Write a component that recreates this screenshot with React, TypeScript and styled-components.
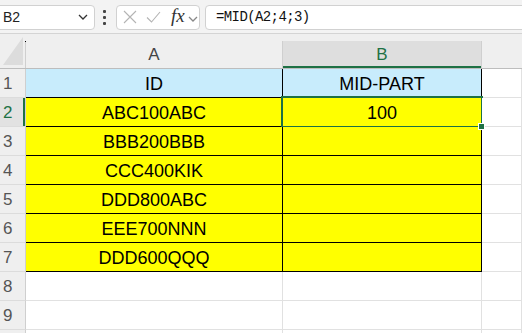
import React from 'react'
import styled, { createGlobalStyle, css } from 'styled-components';

const GlobalStyle = createGlobalStyle`
  body {
    margin: 0;
    background: #ffffff;
    font-family: "Liberation Sans", Arial, sans-serif;
    overflow: hidden;
  }
`;

const GREEN = '#1e7145';

const Window = styled.div`
  width: 522px;
  height: 333px;
  overflow: hidden;
  background: #ffffff;
`;

const Toolbar = styled.div`
  display: flex;
  align-items: center;
  height: 32px;
  padding-top: 1px;
  background: #f3f3f3;
  border-bottom: 1px solid #d4d4d4;
`;

const Box = styled.div`
  display: flex;
  align-items: center;
  height: 23px;
  background: #ffffff;
  border: 1px solid #d1d1d1;
  border-radius: 4px;
  box-sizing: content-box;
`;

const NameBox = styled(Box)`
  width: 85px;
  margin-left: -4px;
  padding: 0 6px 0 6px;
  justify-content: space-between;
  font-size: 14px;
  color: #222;
`;

const Dots = styled.div`
  display: flex;
  flex-direction: column;
  gap: 3px;
  margin: 0 10px 0 8px;
  span {
    width: 3px;
    height: 3px;
    background: #444;
    border-radius: 1px;
  }
`;

const FxBox = styled(Box)`
  width: 82px;
  padding: 0;
`;

const FormulaBox = styled(Box)`
  flex: 1;
  margin-left: 5px;
  margin-right: -6px;
  padding-left: 10px;
  font-family: "Liberation Mono", "DejaVu Sans Mono", monospace;
  font-size: 14px;
  letter-spacing: -0.6px;
  color: #111;
`;

const FxText = styled.span`
  font-family: "Liberation Serif", "DejaVu Serif", serif;
  font-style: italic;
  font-size: 19px;
  color: #333;
  margin-left: 10px;
  margin-top: -2px;
`;

const Sheet = styled.div`
  display: grid;
  grid-template-columns: 26px 257px 199px 1fr;
  grid-template-rows: 35px;
  grid-auto-rows: 29px;
  background: #ffffff;
`;

const Corner = styled.div`
  box-sizing: border-box;
  height: 35px;
  background: #efefef;
  border-bottom: 1px solid #bdbdbd;
  position: relative;
  svg { display: block; margin: 3px 0 0 3px; }
  &::after {
    content: '';
    position: absolute;
    right: 0;
    top: 7px;
    bottom: 0;
    width: 1px;
    background: #cfcfcf;
  }
  &::before {
    content: '';
    position: absolute;
    right: 0;
    top: 7px;
    width: 1px;
    height: 1px;
    background: #000;
    z-index: 1;
  }
`;

const ColHeader = styled.div`
  box-sizing: border-box;
  height: 35px;
  padding-top: 7px;
  display: flex;
  background: #efefef;
  border-bottom: 1px solid #bdbdbd;
`;

const ColLabel = styled.div<{ $active?: boolean; $last?: boolean }>`
  flex: 1;
  display: flex;
  align-items: center;
  justify-content: center;
  font-size: 17px;
  color: #444;
  border-right: ${p => (p.$last ? 'none' : '1px solid #cfcfcf')};
  ${p => p.$active && css`
    background: #dedede;
    color: ${GREEN};
    box-shadow: inset 0 -2px 0 ${GREEN};
  `}
`;

const RowHeader = styled.div<{ $active?: boolean }>`
  box-sizing: border-box;
  display: flex;
  align-items: center;
  padding: 2px 0 0 3px;
  font-size: 17px;
  color: #555;
  background: #efefef;
  border-right: 1px solid #cfcfcf;
  border-bottom: 1px solid #dcdcdc;
  ${p => p.$active && css`
    color: ${GREEN};
    background: #e2e2e2;
    box-shadow: inset -2px 0 0 ${GREEN};
  `}
`;

const Cell = styled.div<{ $fill?: string; $boxed?: boolean; $selected?: boolean }>`
  box-sizing: border-box;
  display: flex;
  align-items: center;
  justify-content: center;
  padding-top: 3px;
  font-size: 18px;
  color: #000;
  background: ${p => p.$fill || '#ffffff'};
  border-right: 1px solid ${p => (p.$boxed ? '#000' : '#e1e1e1')};
  border-bottom: 1px solid ${p => (p.$boxed ? '#000' : '#e1e1e1')};
  position: relative;
  ${p => p.$selected && css`
    &::after {
      content: '';
      position: absolute;
      left: -2px;
      top: -2px;
      right: -2px;
      bottom: -2px;
      border: 2px solid ${GREEN};
    }
    &::before {
      content: '';
      position: absolute;
      right: -4px;
      bottom: -4px;
      width: 5px;
      height: 5px;
      background: ${GREEN};
      border: 1px solid #fff;
      z-index: 2;
    }
  `}
`;

const BLUE = '#c8ecfc';
const YELLOW = '#ffff00';

const ids = ['ABC100ABC', 'BBB200BBB', 'CCC400KIK', 'DDD800ABC', 'EEE700NNN', 'DDD600QQQ'];

const Chevron = ({ color = '#333' }: { color?: string }) => (
  <svg width="10" height="6" viewBox="0 0 10 6">
    <path d="M1 1 L5 5 L9 1" fill="none" stroke={color} strokeWidth="1.3" />
  </svg>
);

const App = () => {
  const rows: { key: string; label: string; a: string; b: string; fill?: string; boxed?: boolean }[] = [
    { key: 'r1', label: '1', a: 'ID', b: 'MID-PART', fill: BLUE, boxed: true },
    ...ids.map((id, i) => ({ key: 'r' + (i + 2), label: String(i + 2), a: id, b: i === 0 ? '100' : '', fill: YELLOW, boxed: true })),
    { key: 'r8', label: '8', a: '', b: '' },
    { key: 'r9', label: '9', a: '', b: '' },
    { key: 'r10', label: '', a: '', b: '' },
  ];

  return <Window>
    <GlobalStyle/>
    <Toolbar>
      <NameBox>
        <span>B2</span>
        <Chevron/>
      </NameBox>
      <Dots><span/><span/><span/></Dots>
      <FxBox>
        <svg width="14" height="14" viewBox="0 0 14 14" style={{ marginLeft: 6 }}>
          <path d="M1 1 L13 13 M13 1 L1 13" stroke="#b4b4b4" strokeWidth="1.1" />
        </svg>
        <svg width="15" height="14" viewBox="0 0 15 14" style={{ marginLeft: 9 }}>
          <path d="M1 7.5 L5.5 12 L14 2" fill="none" stroke="#b4b4b4" strokeWidth="1.1" />
        </svg>
        <FxText>fx</FxText>
        <span style={{ marginLeft: 3 }}><Chevron color="#888"/></span>
      </FxBox>
      <FormulaBox>=MID(A2;4;3)</FormulaBox>
    </Toolbar>

    <Sheet>
      <Corner>
        <svg width="20" height="28" viewBox="0 0 20 28">
          <path d="M20 0 L20 28 L0 28 Z" fill="#dcdcdc" />
        </svg>
      </Corner>
      <ColHeader><ColLabel>A</ColLabel></ColHeader>
      <ColHeader><ColLabel $active>B</ColLabel></ColHeader>
      <ColHeader><ColLabel $last/></ColHeader>

      {rows.map(r => (
        <React.Fragment key={r.key}>
          <RowHeader $active={r.label === '2'}>{r.label}</RowHeader>
          <Cell $fill={r.fill} $boxed={r.boxed}>{r.a}</Cell>
          <Cell $fill={r.fill} $boxed={r.boxed} $selected={r.label === '2'}>{r.b}</Cell>
          <Cell/>
        </React.Fragment>
      ))}
    </Sheet>
  </Window>
};

export default App
